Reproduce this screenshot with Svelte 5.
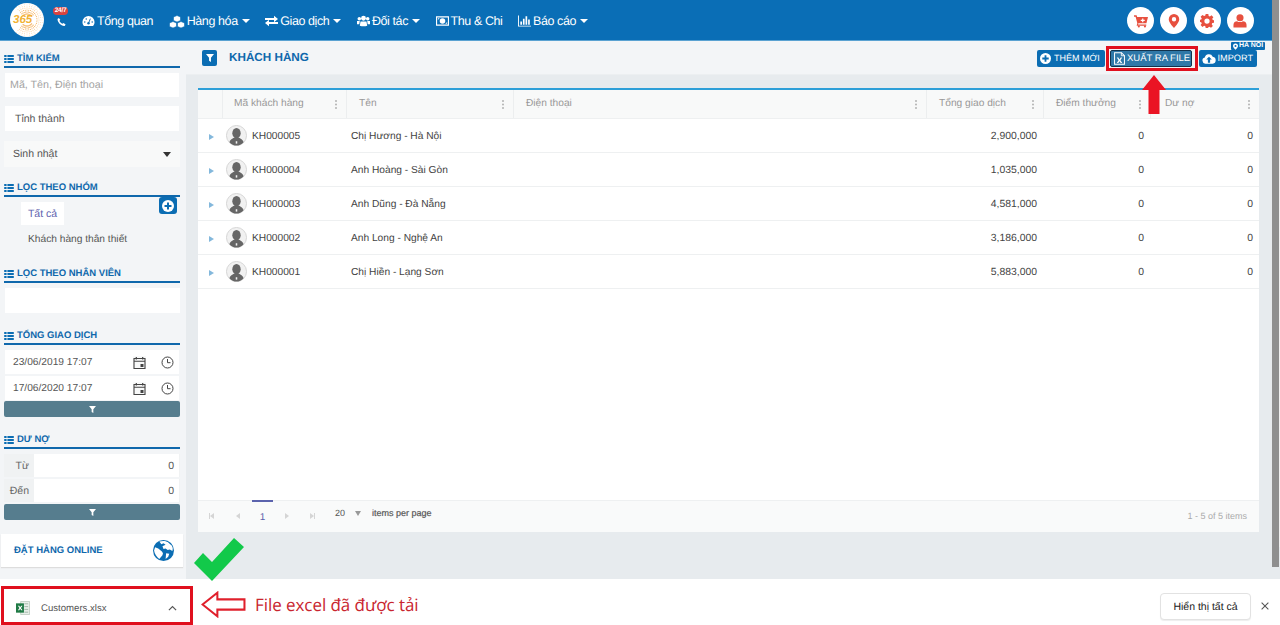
<script>
  const rows = [
    ['KH000005', 'Chị Hương - Hà Nội', '2,900,000'],
    ['KH000004', 'Anh Hoàng - Sài Gòn', '1,035,000'],
    ['KH000003', 'Anh Dũng - Đà Nẵng', '4,581,000'],
    ['KH000002', 'Anh Long - Nghệ An', '3,186,000'],
    ['KH000001', 'Chị Hiền - Lạng Sơn', '5,883,000']
  ];
  const cols = [
    { t: 'Mã khách hàng', c: 'c1' },
    { t: 'Tên', c: 'c2' },
    { t: 'Điện thoại', c: 'c3' },
    { t: 'Tổng giao dịch', c: 'c4' },
    { t: 'Điểm thưởng', c: 'c5' },
    { t: 'Dư nợ', c: 'c6' }
  ];
  const dots = [];
  for (let a = 0; a < 36; a++) {
    for (let r = 6; r < 16.5; r += 2) {
      const deg = a * 10;
      if (deg > 130 && deg < 230) continue;
      if (r < 10 && (deg < 40 || deg > 320)) continue;
      dots.push([20 + r * Math.cos(a * Math.PI / 18), 20 + r * Math.sin(a * Math.PI / 18), 0.3 + (16 - r) * 0.035]);
    }
  }
</script>

{#snippet listIcon()}
  <svg class="list-ic" viewBox="0 0 12 10"><path d="M0 0h3v2.400H0zM4 0h8v2.400H4zM0 3.800h3v2.400H0zM4 3.800h8v2.400H4zM0 7.600h3V10H0zM4 7.600h8V10H4z" fill="#0b6db3"/></svg>
{/snippet}
{#snippet caret()}
  <span class="caret"></span>
{/snippet}
{#snippet funnel(color)}
  <svg class="funnel" viewBox="0 0 10 10"><path d="M0 0h10L6.200 4.600V10L3.800 8.400V4.600z" fill={color}/></svg>
{/snippet}
{#snippet avatar()}
  <svg class="avatar" viewBox="0 0 22 22">
    <circle cx="11" cy="11" r="10.500" fill="#f1f1f1" stroke="#d4d4d4"/>
    <ellipse cx="11" cy="8.600" rx="4.400" ry="5.400" fill="#666"/>
    <path d="M3.600 18c1-3.600 4-4.200 5.400-5h4c1.400.8 4.400 1.400 5.400 5-2 2.400-4.600 3.500-7.400 3.500S5.600 20.400 3.600 18z" fill="#666"/>
    <path d="M10.200 17h1.600v2.500h-1.600z" fill="#f1f1f1"/>
  </svg>
{/snippet}
{#snippet calendar()}
  <svg class="cal" viewBox="0 0 13 13"><path d="M1 2.500h11v10H1z M1 5.300h11" fill="none" stroke="#444" stroke-width="1.100"/><path d="M3.300 1v2.500M9.700 1v2.500" stroke="#444" stroke-width="1.200"/><path d="M7.500 8h3v3h-3z" fill="#444"/></svg>
{/snippet}
{#snippet clock()}
  <svg class="clock" viewBox="0 0 13 13"><circle cx="6.500" cy="6.500" r="5.500" fill="none" stroke="#444" stroke-width="1"/><path d="M6.500 3v3.700h3" fill="none" stroke="#444" stroke-width="1"/></svg>
{/snippet}

<div class="app">
  <header class="topbar">
    <svg class="logo" viewBox="0 0 40 40" aria-hidden="true">
      <circle cx="20" cy="20" r="17" fill="#fff"/>
      {#each dots as d}
        <circle cx={d[0]} cy={d[1]} r={d[2]} fill="#f3a94c"/>
      {/each}
    </svg>
    <span class="logo-text">365</span>
    <div class="phone">
      <span class="badge247">24/7</span>
      <svg viewBox="0 0 12 12" class="ph-ic"><path d="M2.500 0.500 4.400 3 3.300 4.400c.5 1.700 2.200 3.500 4 4l1.400-1.200 2.800 2-1.300 2C5.500 11.700.6 6.500.7 2z" fill="#fff"/></svg>
    </div>
    <nav class="nav">
      <a class="n1">
        <svg viewBox="0 0 14 12" class="ni"><path d="M7 0.500a6.500 6.500 0 0 0-6.500 6.500c0 1.700.6 3.300 1.700 4.500h9.600c1.100-1.200 1.700-2.800 1.700-4.500A6.500 6.500 0 0 0 7 .5z" fill="#fff"/><circle cx="7" cy="8.500" r="1.300" fill="#0b6db3"/><path d="M7 8.500 9 3.500" stroke="#0b6db3" stroke-width="1"/><circle cx="3" cy="7" r=".8" fill="#0b6db3"/><circle cx="11" cy="7" r=".8" fill="#0b6db3"/><circle cx="4.600" cy="3.800" r=".8" fill="#0b6db3"/></svg>
        Tổng quan
      </a>
      <a class="n2">
        <svg viewBox="0 0 16 13" class="ni wide"><path d="M8 .5 11.500 2v3.500L8 7 4.500 5.500V2zM4 6.500 7.500 8v3.500L4 13 .5 11.500V8zM12 6.500 15.500 8v3.500L12 13l-3.500-1.500V8z" fill="#fff" stroke="#0b6db3" stroke-width=".6"/></svg>
        Hàng hóa{@render caret()}
      </a>
      <a class="n3">
        <svg viewBox="0 0 13 11" class="ni"><path d="M0 2.500h9V.3l4 3.200-4 3.200-0-2.200H0zM13 6.500v2H4v2.200L0 7.500l4-3.200v2.200z" fill="#fff"/></svg>
        Giao dịch{@render caret()}
      </a>
      <a class="n4">
        <svg viewBox="0 0 14 12" class="ni"><circle cx="7" cy="3" r="2.600" fill="#fff"/><circle cx="2.500" cy="3.500" r="1.900" fill="#fff"/><circle cx="11.500" cy="3.500" r="1.900" fill="#fff"/><path d="M3.800 6.500h6.400l.8 4.500c-2.500 1-5.500 1-8 0zM0 6h3L2.500 9.500H0zM14 6h-3l.5 3.500H14z" fill="#fff"/></svg>
        Đối tác{@render caret()}
      </a>
      <a class="n5">
        <svg viewBox="0 0 14 10" class="ni"><path fill-rule="evenodd" d="M0 0h14v10H0zM1.200 1.200v7.600h11.600V1.200z" fill="#fff"/><circle cx="7" cy="5" r="3" fill="#fff"/><path d="M2 2h2L2 4zM12 8h-2l2-2z" fill="#fff"/></svg>
        Thu &amp; Chi
      </a>
      <a class="n6">
        <svg viewBox="0 0 14 12" class="ni"><path d="M0 0h1v11h13v1H0zM2.500 6.500h1.800V10H2.500zM5.300 3.500h1.800V10H5.300zM8.100 1h1.800v9H8.100zM10.900 4.500h1.800V10h-1.800z" fill="#fff"/></svg>
        Báo cáo{@render caret()}
      </a>
    </nav>
    <div class="round-btns">
      <span class="rb"><svg viewBox="0 0 16 15"><path d="M0 1h3l.6 2H16l-1.800 7H5l-.4 1.500H14V13H3l.8-3L1.800 2.500H0z" fill="#e7503f"/><circle cx="5.500" cy="13.800" r="1.200" fill="#e7503f"/><circle cx="12.500" cy="13.800" r="1.200" fill="#e7503f"/><path d="M9.300 4.500h1.400v1.600h1.600v1.300h-1.600V9H9.300V7.400H7.700V6.100h1.600z" fill="#fff"/></svg></span>
      <span class="rb"><svg viewBox="0 0 12 16"><path fill-rule="evenodd" d="M6 0a6 6 0 0 1 6 6c0 3-3.500 7.500-6 10C3.500 13.500 0 9 0 6a6 6 0 0 1 6-6zm0 3.500a2.500 2.500 0 1 0 0 5 2.500 2.500 0 0 0 0-5z" fill="#e7503f"/></svg></span>
      <span class="rb"><svg viewBox="0 0 16 16"><path fill-rule="evenodd" d="M6.500 0h3l.4 2.200 1.400.6L13.200 1.500l2.100 2.100L14 5.500l.6 1.400 1.400.1v3l-2 .4-.6 1.400 1.300 1.900-2.100 2.100-1.900-1.300-1.400.6L9.500 16h-3l-.4-1.900-1.400-.6-1.900 1.300L.7 12.700 2 10.800l-.6-1.400L0 9V6.500l1.400-.1.600-1.400L.7 3.100l2.100-2.100L4.700 2.300l1.400-.6zM8 5a3 3 0 1 0 0 6 3 3 0 0 0 0-6z" fill="#e7503f"/></svg></span>
      <span class="rb"><svg viewBox="0 0 14 15"><circle cx="7" cy="4" r="3.800" fill="#e7503f"/><path d="M0 14.500v-3c0-2.500 2-3.700 3.800-3.700 1.800 1.200 4.600 1.200 6.400 0 1.800 0 3.800 1.200 3.800 3.700v3z" fill="#e7503f"/></svg></span>
    </div>
  </header>

  <div class="body">
    <aside class="side">
      <h4 class="sec first">{@render listIcon()}TÌM KIẾM</h4>
      <div class="field ph">Mã, Tên, Điện thoại</div>
      <div class="field select">Tỉnh thành</div>
      <div class="field dd"><span>Sinh nhật</span><i class="dd-caret"></i></div>

      <h4 class="sec s2">{@render listIcon()}LỌC THEO NHÓM</h4>
      <div class="groups">
        <span class="all">Tất cả</span>
        <button class="add" aria-label="Thêm nhóm"><svg viewBox="0 0 12 12"><circle cx="6" cy="6" r="6" fill="#fff"/><path d="M5 2.500h2V5h2.500v2H7v2.500H5V7H2.500V5H5z" fill="#0b6db3"/></svg></button>
        <span class="vip">Khách hàng thân thiết</span>
      </div>

      <h4 class="sec s3">{@render listIcon()}LỌC THEO NHÂN VIÊN</h4>
      <div class="field empty"></div>

      <h4 class="sec s4">{@render listIcon()}TỔNG GIAO DỊCH</h4>
      <div class="date"><span>23/06/2019 17:07</span>{@render calendar()}{@render clock()}</div>
      <div class="date d2"><span>17/06/2020 17:07</span>{@render calendar()}{@render clock()}</div>
      <div class="fbtn">{@render funnel('#fff')}</div>

      <h4 class="sec s5">{@render listIcon()}DƯ NỢ</h4>
      <div class="range"><label>Từ</label><span>0</span></div>
      <div class="range"><label>Đến</label><span>0</span></div>
      <div class="fbtn">{@render funnel('#fff')}</div>

      <div class="online">
        <span>ĐẶT HÀNG ONLINE</span>
        <svg viewBox="0 0 20 20" class="globe"><circle cx="10" cy="10" r="10" fill="#0b6db3"/><path d="M6 1.500c2-.8 6-1 8 .5l4 3.500c1 2 1 3 .5 5L16 9l-2 .5-2-1.500-2 .5-1-2.500 3-1.500-2-1.500-2 1zM2 7l3 1 3.500 3 1 1.500-.5 2L7 17l-1 1C3.500 16.500 1.500 13 1 10zM12.500 12.500l3 .5-1 3-2.500 2z" fill="#fff"/></svg>
      </div>
    </aside>

    <main class="content">
      <div class="titlebar">
        <span class="title-ic">{@render funnel('#fff')}</span>
        <h1>KHÁCH HÀNG</h1>
        <div class="actions">
          <span class="hanoi"><svg viewBox="0 0 8 10"><path fill-rule="evenodd" d="M4 0a4 4 0 0 1 4 4c0 2-2.500 4.500-4 6C2.500 8.500 0 6 0 4a4 4 0 0 1 4-4zm0 2.400a1.600 1.600 0 1 0 0 3.200 1.600 1.600 0 0 0 0-3.200z" fill="#fff"/></svg>HA NOI</span>
          <button class="act a1"><svg viewBox="0 0 12 12"><circle cx="6" cy="6" r="6" fill="#fff"/><path d="M5 2.500h2V5h2.500v2H7v2.500H5V7H2.500V5H5z" fill="#0b6db3"/></svg>THÊM MỚI</button>
          <button class="act a2"><svg viewBox="0 0 12 14"><path d="M.6.6h7.500L11.400 4v9.400H.6z" fill="none" stroke="#fff" stroke-width="1.100"/><path d="M8 .6V4h3.400" fill="none" stroke="#fff"/><path d="M3 6h1.700L6 8l1.300-2H9L7 9l2 3H7.300L6 10l-1.300 2H3l2-3z" fill="#fff"/></svg>XUẤT RA FILE</button>
          <button class="act a3"><svg viewBox="0 0 15 11"><path d="M3.500 11A3.300 3.300 0 0 1 3 4.500 4.500 4.500 0 0 1 11.500 3.500 3.800 3.800 0 0 1 11.500 11z" fill="#fff"/><path d="M7.500 3.500 10.500 6.700H8.700V10H6.300V6.700H4.500z" fill="#0b6db3"/></svg>IMPORT</button>
        </div>
      </div>

      <section class="card">
        <div class="grid-head">
          <div class="cell exp"></div>
          {#each cols as col}
            <div class="cell hd {col.c}"><span>{col.t}</span><i class="kebab"></i></div>
          {/each}
        </div>
        <div class="grid-body">
          {#each rows as r}
            <div class="row">
              <div class="cell exp"><i class="tri"></i></div>
              <div class="cell c1 code">{@render avatar()}{r[0]}</div>
              <div class="cell c2 pad">{r[1]}</div>
              <div class="cell c3"></div>
              <div class="cell c4 num">{r[2]}</div>
              <div class="cell c5 num">0</div>
              <div class="cell c6 num">0</div>
            </div>
          {/each}
        </div>
        <footer class="pager">
          <i class="pg first-pg"></i>
          <i class="pg prev"></i>
          <span class="cur">1</span>
          <i class="pg next"></i>
          <i class="pg last-pg"></i>
          <span class="size">20</span>
          <i class="size-caret"></i>
          <span class="ipp">items per page</span>
          <span class="total">1 - 5 of 5 items</span>
        </footer>
      </section>
    </main>
    <div class="scrollbar"><div class="thumb"></div></div>
  </div>

  <div class="dlbar">
    <div class="dlfile">
      <svg viewBox="0 0 15 15" class="xls"><path d="M5 .5h9.500v14H5z" fill="#e8efe9" stroke="#9fb5a6" stroke-width=".6"/><path d="M9 3h4M9 6h4M9 9h4M9 12h4" stroke="#9fb5a6"/><path d="M0 2.500h8.500v10H0z" fill="#1f7a45"/><path d="M2 5h1.500l1 1.700L5.500 5H7L5.300 7.500 7 10H5.500l-1-1.700-1 1.700H2l1.700-2.500z" fill="#fff"/></svg>
      <span class="fname">Customers.xlsx</span>
      <svg viewBox="0 0 10 6" class="chev"><path d="M1 5.300 5 1.300l4 4" fill="none" stroke="#555" stroke-width="1.300"/></svg>
    </div>
    <span class="note">File excel đã được tải</span>
    <button class="showall">Hiển thị tất cả</button>
    <svg viewBox="0 0 9 9" class="close"><path d="M.7.7l7.600 7.600M8.300.7.700 8.300" stroke="#555" stroke-width="1.200"/></svg>
  </div>

  <div class="mark box-export"></div>
  <svg class="mark arrow-up" viewBox="0 0 24 39"><path d="M12 0 24 15H17.500V39H6.500V15H0z" fill="#ea1424"/></svg>
  <svg class="mark check" viewBox="0 0 50 43"><path d="M0 25 9 15 18 24 40 0 50 9 18 43z" fill="#12c94a"/></svg>
  <div class="mark box-file"></div>
  <svg class="mark arrow-left" viewBox="0 0 44 26"><path d="M1.500 13 16 1.500V8h26.500v10H16v6.500z" fill="#fff" stroke="#e0202c" stroke-width="2"/></svg>
</div>

<style>
  :global(body) { margin: 0; background: #fff; }
  .app {
    position: relative;
    width: 1280px;
    height: 625px;
    overflow: hidden;
    display: flex;
    flex-direction: column;
    font-family: "Liberation Sans", Arial, sans-serif;
    color: #444;
    text-rendering: geometricPrecision;
  }
  .topbar {
    position: relative;
    height: 40px;
    width: 1272px;
    flex: none;
    background: #0a6eb6;
    border-bottom: 1px solid #5aa2d2;
    box-sizing: content-box;
    display: flex;
    align-items: center;
    color: #fff;
  }
  .logo { position: absolute; left: 7px; top: 0; width: 40px; height: 40px; }
  .logo-text {
    position: absolute; left: 13px; top: 14px; font-size: 11.500px; font-weight: bold; font-style: italic; color: #f2b233;
  }
  .phone { position: absolute; left: 46px; top: 6px; width: 24px; height: 26px; }
  .badge247 {
    position: absolute; left: 7px; top: 1px; width: 15px; height: 8px; border-radius: 4px;
    background: #d9433f; color: #fff; font-size: 6.500px; font-weight: bold; line-height: 8px; text-align: center; letter-spacing: -.3px;
  }
  .ph-ic { position: absolute; left: 11px; top: 11px; width: 9px; height: 10px; }
  .nav { position: absolute; left: 82px; top: 1px; height: 40px; display: flex; align-items: center; font-size: 12.500px; }
  .nav a { display: flex; align-items: center; color: #fff; white-space: nowrap; margin-right: 15.500px; gap: 2px; letter-spacing: -.4px; }
  .ni { width: 13px; height: 12px; flex: none; }
  .ni.wide { width: 16px; height: 13px; }
  .caret { display: inline-block; width: 0; height: 0; border: 4px solid transparent; border-top: 4.500px solid #fff; border-bottom: 0; margin-left: 2px; }
  .round-btns { position: absolute; left: 1127px; top: 7px; display: flex; gap: 6.300px; }
  .rb { width: 27px; height: 27px; border-radius: 50%; background: #fff; display: flex; align-items: center; justify-content: center; }
  .rb svg { width: 14px; height: 14px; }

  .body { flex: 1; display: flex; min-height: 0; position: relative; background: #e7ebee; }
  .side { width: 186px; flex: none; background: #f3f5f7; box-sizing: border-box; padding: 0 6px 0 4px; height: 539px; }
  .sec {
    margin: 0; font-size: 9.500px; font-weight: bold; color: #0f68ac; border-bottom: 2px solid #0f68ac;
    height: 13px; line-height: 11px; display: flex; align-items: center; gap: 2px; padding-bottom: 1px; box-sizing: content-box;
  }
  .list-ic { width: 10px; height: 8px; flex: none; margin-right: 1px; }
  .sec.first { margin-top: 11px; }
  .field { background: #fff; font-size: 10.500px; display: flex; align-items: center; box-sizing: border-box; }
  .field.ph { margin-top: 5px; height: 24px; padding-left: 5px; color: #a3a3a3; margin-left: 1px; margin-right: 1px; font-size: 10.700px; }
  .field.select { margin-top: 9px; height: 25px; padding-left: 10px; margin-left: 1px; margin-right: 1px; color: #555; }
  .field.dd { margin-top: 10px; height: 26px; padding: 0 9px; background: #f8f9f9; justify-content: space-between; color: #555; }
  .dd-caret { width: 0; height: 0; border: 4px solid transparent; border-top: 5px solid #333; border-bottom: 0; }
  .sec.s2 { margin-top: 14px; }
  .groups { position: relative; height: 70px; font-size: 10.200px; }
  .all { position: absolute; left: 17px; top: 5px; width: 43px; height: 23px; background: #fff; color: #5e5fae; display: flex; align-items: center; justify-content: center; font-size: 10.500px; }
  .vip { position: absolute; left: 24px; top: 37px; color: #555; white-space: nowrap; }
  .add { position: absolute; left: 155px; top: 0; width: 18px; height: 17px; padding: 0; border: 0; border-radius: 3px; background: #0b6db3; display: flex; align-items: center; justify-content: center; }
  .add svg { width: 12px; height: 12px; }
  .sec.s3 { margin-top: 0; }
  .field.empty { margin-top: 5px; height: 25px; margin-left: 1px; }
  .sec.s4 { margin-top: 16px; }
  .date { height: 24px; margin: 0 1px 2px; background: #fff; display: flex; align-items: center; font-size: 10.200px; color: #555; padding-left: 8px; box-sizing: border-box; }
  .sec.s4 + .date { margin-top: 5px; }
  .date.d2 { margin-bottom: 1px; }
  .date span { width: 119px; flex: none; }
  .cal { width: 13px; height: 13px; margin-left: 1px; background: #f8f9f9; flex: none; }
  .clock { width: 13px; height: 13px; margin-left: 15px; flex: none; }
  .fbtn { height: 16px; background: #567d8e; border-radius: 2px; display: flex; align-items: center; justify-content: center; }
  .fbtn .funnel { width: 7px; height: 7px; }
  .sec.s5 { margin-top: 16px; }
  .range { display: flex; height: 23px; margin-bottom: 2px; background: #f0f2f3; font-size: 10.500px; align-items: stretch; }
  .sec.s5 + .range { margin-top: 5px; }
  .range label { width: 30px; display: flex; align-items: center; justify-content: flex-end; color: #666; padding-right: 5px; flex: none; box-sizing: border-box; }
  .range span { flex: 1; background: #fff; display: flex; align-items: center; justify-content: flex-end; padding-right: 5px; margin-right: 1px; color: #555; }
  .online {
    margin: 14px -3px 0 -3px; height: 33px; background: #fff; display: flex; align-items: center; justify-content: space-between;
    padding: 0 9px 0 13px; font-size: 9.500px; font-weight: bold; color: #0f68ac; box-shadow: 0 1px 1px #ddd; width: 182px; box-sizing: border-box;
  }
  .globe { width: 21px; height: 21px; }

  .content { flex: 1; min-width: 0; display: flex; flex-direction: column; }
  .titlebar { height: 33px; background: #f3f5f7; display: flex; align-items: center; flex: none; position: relative; padding-left: 16px; border-bottom: 1px solid #eceff1; }
  .title-ic { width: 15px; height: 16px; border-radius: 2px; background: #0b6db3; display: flex; align-items: center; justify-content: center; }
  .title-ic .funnel { width: 8px; height: 8px; }
  .titlebar h1 { margin: 0 0 0 12px; font-size: 11.700px; font-weight: bold; color: #0f68ac; }
  .actions { margin-left: auto; margin-right: 15px; display: flex; align-items: center; margin-top: 1px; }
  .act {
    height: 17px; border: 0; padding: 0 3px; border-radius: 2px; background: #0b6db3; color: #fff; display: flex; align-items: center; gap: 2px;
    font-family: inherit; font-size: 9.500px; white-space: nowrap; box-sizing: border-box; margin: 0; text-rendering: geometricPrecision;
  }
  .act svg { width: 11px; height: 11px; flex: none; }
  .a1 { width: 68px; font-size: 9px; gap: 3px; }
  .a2 { width: 82px; margin-left: 5px; margin-right: 7px; background: #2f78a8; border: 1px solid #12334d; }
  .a2 svg { height: 13px; }
  .a3 { width: 58px; font-size: 9.200px; gap: 1.500px; }
  .a3 svg { width: 14px; }
  .hanoi {
    position: absolute; left: 1045px; top: 1px; width: 34px; height: 8px; background: #0b6db3; color: #fff; border-radius: 1px;
    font-size: 7px; font-weight: bold; line-height: 8px; display: flex; align-items: center; justify-content: center; gap: 1px; white-space: nowrap;
  }
  .hanoi svg { width: 5px; height: 7px; }

  .card { margin: 13px 13px 0 12px; height: 444px; background: #fff; display: flex; flex-direction: column; border-top: 2px solid #2d9fd8; box-sizing: border-box; flex: none; }
  .grid-head, .row { display: grid; grid-template-columns: 24px 124px 167px 413px 117px 107px 109px; }
  .grid-head { height: 29px; background: #f8f9f9; border-bottom: 1px solid #eef0f1; box-sizing: border-box; }
  .row { height: 34px; border-bottom: 1px solid #eef0f1; box-sizing: border-box; font-size: 10.200px; color: #444; }
  .row .cell { padding-top: 2px; }
  .row .num { font-size: 10.400px; }
  .cell { display: flex; align-items: center; box-sizing: border-box; min-width: 0; }
  .hd { position: relative; border-left: 1px solid #eceeef; padding-left: 11px; padding-bottom: 2px; font-size: 10.200px; color: #989898; }
  .exp { justify-content: center; }
  .grid-head .c2, .grid-head .c3, .grid-head .c4, .grid-head .c5 { padding-left: 12px; }
  .grid-head .c6 { padding-left: 14px; }
  .kebab { position: absolute; right: 9px; top: 10px; width: 2px; height: 2px; border-radius: 50%; background: #b3b3b3; box-shadow: 0 3.500px 0 #b3b3b3, 0 7px 0 #b3b3b3; }
  .tri { width: 0; height: 0; border: 3px solid transparent; border-left: 5px solid #83b8dc; border-right: 0; margin-left: 2px; }
  .code { padding-left: 4px; gap: 5px; }
  .avatar { width: 21px; height: 21px; flex: none; margin-top: -2px; }
  .pad { padding-left: 5px; }
  .num { justify-content: flex-end; padding-right: 6px; }
  .grid-body { flex: 1; }
  .pager { height: 32px; flex: none; position: relative; background: #f9fafa; border-top: 1px solid #eef0f1; font-size: 9px; color: #555; display: flex; align-items: center; box-sizing: border-box; }
  .pg { position: absolute; top: 12px; width: 0; height: 0; border: 3px solid transparent; }
  .prev { left: 38px; border-right: 4px solid #d5d5d5; border-left: 0; }
  .next { left: 87px; border-left: 4px solid #d5d5d5; border-right: 0; }
  .first-pg { left: 12px; border-right: 4px solid #d5d5d5; border-left: 0; }
  .first-pg::before { content: ""; position: absolute; left: -1px; top: -3px; width: 1px; height: 6px; background: #d5d5d5; }
  .last-pg { left: 112px; border-left: 4px solid #d5d5d5; border-right: 0; }
  .last-pg::after { content: ""; position: absolute; left: 0; top: -3px; width: 1px; height: 6px; background: #d5d5d5; }
  .cur { position: absolute; left: 54px; top: -1px; width: 21px; height: 29px; border-top: 2px solid #5b63ad; box-sizing: border-box; text-align: center; color: #5b63ad; line-height: 32px; font-size: 10px; }
  .size { position: absolute; left: 137px; top: 7px; }
  .size-caret { position: absolute; left: 157px; top: 10px; width: 0; height: 0; border: 3.500px solid transparent; border-top: 5px solid #999; border-bottom: 0; }
  .ipp { position: absolute; left: 174px; top: 7px; -webkit-text-stroke: .2px #555; }
  .total { position: absolute; right: 12px; top: 10px; color: #aaa; }
  .scrollbar { width: 8px; flex: none; background: #f1f1f1; height: 547px; position: relative; z-index: 2; margin-top: -41px; }
  .thumb { width: 7px; height: 567px; background: #8f8f8f; }

  .dlbar { height: 46px; flex: none; background: #fff; position: relative; display: flex; align-items: center; z-index: 1; }
  .dlfile { width: 169px; margin-left: 16px; display: flex; align-items: center; font-size: 9.600px; color: #555; margin-top: 12px; }
  .xls { width: 14px; height: 14px; flex: none; }
  .fname { margin-left: 11px; flex: 1; }
  .chev { width: 9px; height: 6px; margin-right: 8px; }
  .note { position: absolute; left: 255px; top: 15px; font-size: 17px; color: #c9252f; line-height: 22px; font-family: "Open Sans", sans-serif; letter-spacing: -.06px; }
  .showall {
    position: absolute; left: 1160px; top: 14px; width: 91px; height: 27px; background: #fff; border: 1px solid #e2e2e2; border-radius: 4px;
    font-size: 10.500px; color: #222; font-family: inherit; padding: 0; box-shadow: 0 1px 1px #eee; text-rendering: geometricPrecision;
  }
  .close { position: absolute; left: 1261px; top: 23px; width: 8px; height: 8px; }

  .mark { position: absolute; z-index: 5; display: block; }
  .box-export { left: 1106px; top: 46px; width: 92px; height: 25px; border: 3px solid #e0101e; box-sizing: border-box; }
  .arrow-up { left: 1142px; top: 75px; width: 24px; height: 39px; }
  .check { left: 194px; top: 538px; width: 50px; height: 43px; }
  .box-file { left: 1px; top: 586px; width: 192px; height: 39px; border: 3px solid #e0101e; box-sizing: border-box; }
  .arrow-left { left: 201px; top: 591px; width: 45px; height: 27px; }
</style>
